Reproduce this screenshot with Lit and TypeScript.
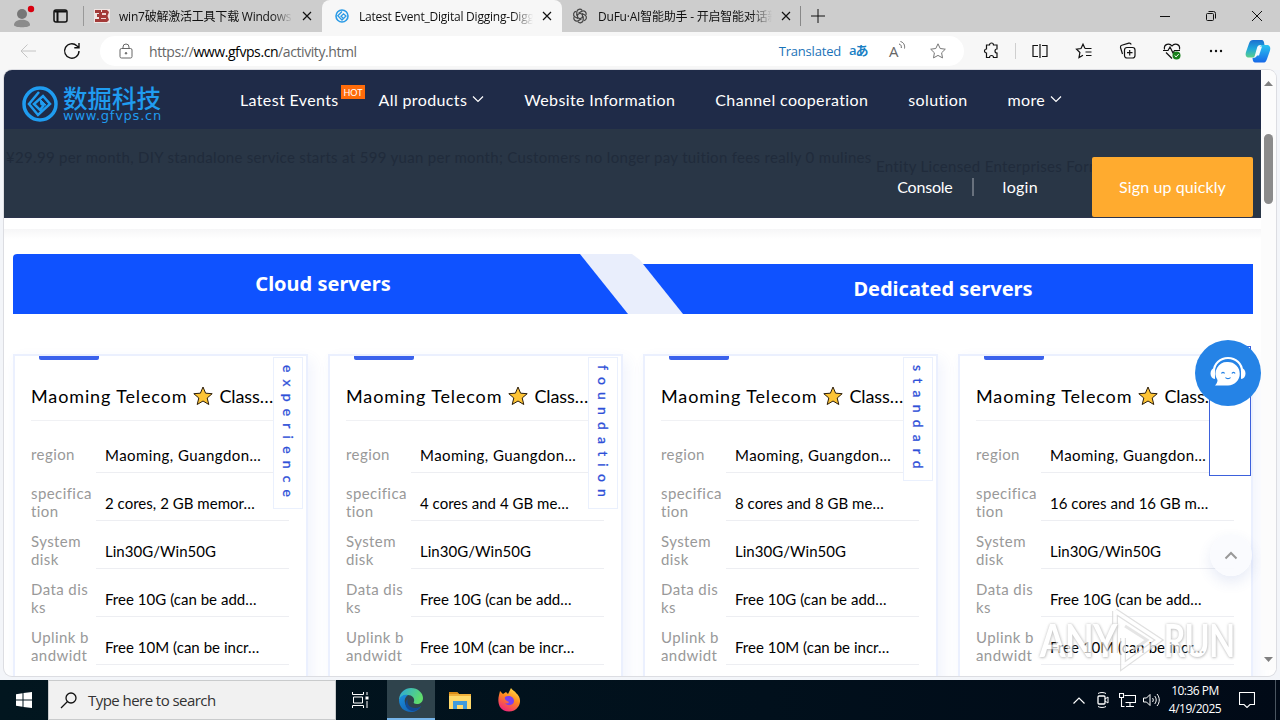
import { html, css, svg, nothing, LitElement, TemplateResult } from "lit";
import { customElement, property } from "lit/decorators.js";
import { classMap } from "lit/directives/class-map.js";

interface Plan {
  level: string;
  spec: string;
}

const PLANS: Plan[] = [
  { level: "experience", spec: "2 cores, 2 GB memor…" },
  { level: "foundation", spec: "4 cores and 4 GB me…" },
  { level: "standard", spec: "8 cores and 8 GB me…" },
  { level: "", spec: "16 cores and 16 GB m…" },
];

const FONT_WEB = css`Lato, "Noto Sans CJK SC", sans-serif`;
const FONT_UI = css`"Open Sans", "Noto Sans CJK SC", sans-serif`;

// all icons use a box of w x h user units = px
const icon = (w: number, h: number, body: TemplateResult) => html`
  <svg width=${w} height=${h} viewBox="0 0 ${w} ${h}" fill="none" stroke="currentColor">${body}</svg>
`;

const closeIcon = icon(10, 10, svg`<path d="M1 1l8 8M9 1l-8 8" stroke-width="1.2" />`);
const chevron = icon(12, 8, svg`<path d="M1 1.5l5 5 5-5" stroke-width="1.2" />`);
const star = "M9 1.8l2.2 4.7 5.1.7-3.7 3.6.9 5.1L9 13.4l-4.5 2.5.9-5.1L1.7 7.2l5.1-.7z";

@customElement("browser-chrome")
export class BrowserChrome extends LitElement {
  private tab(title: string, favicon: TemplateResult, kind = "") {
    return html`
      <div class=${classMap({ tab: true, active: kind === "active", last: kind === "last" })}>
        <span class="favicon">${favicon}</span>
        <span class="title">${title}</span>
        ${closeIcon}
      </div>
    `;
  }

  override render() {
    return html`
      <div class="strip">
        <div class="profile">
          ${icon(22, 24, svg`<g stroke="none"><circle cx="9" cy="9" r="5" fill="#777" /><path d="M1 20c0-7 16-7 16 0 0 3-16 3-16 0z" fill="#8b8b8b" /><circle cx="18" cy="4" r="3.2" fill="#d8000f" /></g>`)}
        </div>
        <div class="actions">
          ${icon(15, 14, svg`<rect x="1" y="1" width="13" height="12" rx="2" stroke-width="1.5" /><path d="M1.5 2.5h12M4.500 3v10" stroke-width="2" />`)}
        </div>
        ${this.tab(
          "win7破解激活工具下载 Windows 7",
          icon(16, 14, svg`<g stroke="none"><path d="M0 0h16v14H0z" fill="#efe6e4" /><path d="M1 1h6v2h1V1h5l2 2-1.500 4L15 11l-2 2H1v-3h4V8H3V5h2V4H1z" fill="#a33a38" /><path d="M8 4h4v2H8zM7 9h5v1H7z" fill="#efd6d4" /></g>`)
        )}
        ${this.tab(
          "Latest Event_Digital Digging-Digging",
          icon(14, 14, svg`<circle cx="7" cy="7" r="6" stroke="#2b9be6" stroke-width="1.6" /><path d="M7 2.500L2.800 6.800 7 11l4-4-2.500-2.200-2.500 2.400L8 9" stroke="#2b9be6" stroke-width="1.3" />`),
          "active"
        )}
        ${this.tab(
          "DuFu·AI智能助手 - 开启智能对话新",
          icon(16, 16, svg`<g stroke="#444" stroke-width="1.2">${[0, 60, 120, 180, 240, 300].map(
            (a) => svg`<path d="M8 5.200L4.800 7V3.800a3 3 0 0 1 5.300-1.500" transform="rotate(${a} 8 8)" />`
          )}</g>`),
          "last"
        )}
        <div class="plus">${icon(14, 14, svg`<path d="M7 0v14M0 7h14" />`)}</div>
        <div class="controls">
          <span>${icon(10, 10, svg`<path d="M0 5.500h10" />`)}</span>
          <span>${icon(10, 10, svg`<rect x=".5" y="2.500" width="7" height="7" rx="1" /><path d="M2.500.5h5a2 2 0 0 1 2 2v5" />`)}</span>
          <span>${icon(10, 10, svg`<path d="M0 0l10 10M10 0L0 10" />`)}</span>
        </div>
      </div>
      <div class="toolbar">
        <span class="back">${icon(16, 14, svg`<path d="M16 7H1M7.500.5L1 7l6.500 6.500" />`)}</span>
        <span class="reload">${icon(18, 18, svg`<path d="M16 9a7.200 7.200 0 1 1-2.200-5.200L16 5.500M16 1v4.700h-4.700" stroke-width="1.4" />`)}</span>
        <div class="address">
          ${icon(14, 16, svg`<rect x="1" y="5.500" width="12" height="9.500" rx="1.500" /><path d="M4 5.500V4a3 3 0 0 1 6 0v1.500" /><circle cx="7" cy="10.300" r=".8" fill="currentColor" />`)}
          <span class="url">https://<b>www.gfvps.cn</b>/activity.html</span>
          <span class="translated">Translated</span>
          <span class="lang">aあ</span>
          <span class="read">A${icon(7, 9, svg`<path d="M0 3c2 .5 2.500 2 2.300 4M1.500.5c3.500 1 4.500 4 4 7" />`)}</span>
          ${icon(18, 18, svg`<path d=${star} stroke="#777" />`)}
        </div>
        <span class="tool first">${icon(18, 18, svg`<path d="M4.500 3h3a2 2 0 0 1 4 0H15v4a2 2 0 0 0 0 4v4.500h-3.500a2 2 0 0 0-4 0h-3V11a2 2 0 0 1 0-4z" stroke-width="1.2" />`)}</span>
        <i class="sep"></i>
        <span class="tool">${icon(16, 14, svg`<path d="M6 1.500H1v11h5M10 1.500h5v11h-5M8 0v14" stroke-width="1.2" />`)}</span>
        <span class="tool">${icon(18, 18, svg`<path d="M10 6.500L8 2.200 6 6.500l-4.500.7 3.400 3.300L4 15.500l4-2.300M10 6.500h6.500M10.500 10h6M11 13.500h5.500" stroke-width="1.2" />`)}</span>
        <span class="tool">${icon(18, 18, svg`<rect x="5.500" y="5.500" width="10.500" height="10.500" rx="2.500" stroke-width="1.2" /><path d="M10.700 8v5.500M8 10.700h5.500M3.500 12L1.500 5.500a2 2 0 0 1 1.300-2.300l7-2a2 2 0 0 1 2.400 1.300" stroke-width="1.2" />`)}</span>
        <span class="tool">${icon(18, 18, svg`<path d="M1.500 7.500C.5 2 6.500.5 9 4c2.500-3.500 8.500-2 7.500 3.500M0 8.500h5l2-3.500 3 6 1.500-2.500H17M3 10.500l6 6" stroke-width="1.2" /><circle cx="13.500" cy="13.500" r="4" fill="#18801c" stroke="none" /><path d="M11.600 13.500l1.500 1.400 2.600-2.800" stroke="#fff" />`)}</span>
        <span class="tool">${icon(16, 4, svg`<g fill="currentColor" stroke="none"><circle cx="3" cy="2" r="1.200" /><circle cx="8" cy="2" r="1.200" /><circle cx="13" cy="2" r="1.200" /></g>`)}</span>
        <span class="copilot">
          ${icon(26, 24, svg`
            <defs>
              <linearGradient id="l" x1="0" y1="0" x2="0" y2="1"><stop offset="0" stop-color="#1b6fd0" /><stop offset=".5" stop-color="#1fa8dc" /><stop offset="1" stop-color="#5ccf8a" /></linearGradient>
              <linearGradient id="r" x1="0" y1="0" x2="0" y2="1"><stop offset="0" stop-color="#2ac4f0" /><stop offset="1" stop-color="#1668e8" /></linearGradient>
            </defs>
            <g stroke="none">
              <path d="M8 1h8c3 0 3 2 3.500 5h-4c-2 0-3 1-3.500 3l-2 7c-.5 2-1 2.500-3 2.500H4c-3 0-4-2-3-5.500l3-8.500C5 1.500 6 1 8 1z" fill="url(#l)" />
              <path d="M18 23.500H11c-3 0-3-1.500-3.500-4.500 3 0 4-1 4.700-3l2.300-7c.5-2 1-3 3-3h4c3 0 4.500 2 3.500 5.500l-3 8.500c-1 3-2 3.500-4 3.500z" fill="url(#r)" />
              <path d="M13 7.500h4l-3 9h-3.500z" fill="#f2fbff" />
            </g>`)}
        </span>
      </div>
    `;
  }

  static styles = css`
    :host { display: block; font-family: ${FONT_UI}; color: #111; }
    svg { display: block; flex: none; }
    .strip { display: flex; align-items: center; height: 32px; background: #cdcdcd; }
    .profile { width: 22px; margin: 2px 0 0 13px; }
    .actions { width: 30px; padding-left: 18px; }
    .tab {
      display: flex;
      align-items: center;
      box-sizing: border-box;
      width: 239px;
      height: 32px;
      padding: 0 10px;
      font-size: 12px;
    }
    .tab:not(.active)::before { content: ""; width: 1px; height: 20px; background: #999; margin-left: -10px; }
    .tab.last::before { display: none; }
    .tab.active { width: 240px; height: 33px; background: #f7f7f7; border-radius: 8px 8px 0 0; padding-left: 12px; }
    .favicon { width: 16px; margin-right: 9px; display: flex; justify-content: center; }
    .tab:not(.active):not(.last) .favicon { margin-left: 10px; }
    .tab.last .favicon { margin-right: 10px; }
    .title {
      width: 174px;
      margin-right: 9px;
      overflow: hidden;
      white-space: nowrap;
      letter-spacing: -0.22px;
      mask-image: linear-gradient(to right, #000 88%, transparent);
    }
    .plus { padding-left: 10px; margin-left: -1px; border-left: 1px solid #888; height: 20px; display: flex; align-items: center; }
    .controls { margin-left: auto; display: flex; }
    .controls span { width: 46px; display: flex; justify-content: center; }
    .toolbar { display: flex; align-items: center; height: 38px; background: #f7f7f7; }
    .back { color: #c4c4c4; padding-left: 20px; }
    .reload { padding-left: 27px; }
    .address {
      display: flex;
      align-items: center;
      box-sizing: border-box;
      width: 864px;
      height: 30px;
      margin-left: 19px;
      padding: 0 17px 0 19px;
      border-radius: 15px;
      background: #fff;
      color: #666;
      font-size: 14px;
    }
    .url { flex: 1; margin-left: 16px; letter-spacing: -0.42px; }
    .url b { font-weight: 400; color: #000; }
    .translated { color: #1a73b8; font-size: 13px; letter-spacing: -0.2px; }
    .lang { color: #1a7fc4; font-size: 13px; font-weight: 600; width: 34px; padding-left: 8px; box-sizing: border-box; margin-bottom: 3px; white-space: nowrap; letter-spacing: -1px; }
    .read { display: flex; width: 17px; margin: 0 23px 0 14px; font-size: 15px; }
    .tool { width: 44px; display: flex; justify-content: center; }
    .tool.first { margin-left: 5px; }
    .sep { width: 1px; height: 16px; background: #cfcfcf; margin: 0 2px; }
    .copilot { padding-left: 7px; }
  `;
}

@customElement("server-card")
export class ServerCard extends LitElement {
  @property() level = "";
  @property() spec = "";

  private row(label: string[], value: string) {
    return html`
      <div class="row">
        <span class="label">${label.map((l) => html`<span>${l}</span>`)}</span>
        <span class=${classMap({ value: true, tight: /\d/.test(value) })}>${value}</span>
      </div>
    `;
  }

  override render() {
    return html`
      <div class="accent"></div>
      <h3>
        <span>Maoming Telecom</span>
        ${icon(20, 20, svg`<path d="M10 1l2.600 6.200 6.600.5-5 4.300 1.600 6.500L10 15l-5.800 3.500L5.800 12 .8 7.700l6.600-.5z" fill="#fdc436" stroke="#2b1d0a" />`)}
        <span class="series">Class…</span>
      </h3>
      ${this.row(["region"], "Maoming, Guangdon…")}
      ${this.row(["specifica", "tion"], this.spec)}
      ${this.row(["System", "disk"], "Lin30G/Win50G")}
      ${this.row(["Data dis", "ks"], "Free 10G (can be add…")}
      ${this.row(["Uplink b", "andwidt"], "Free 10M (can be incr…")}
      ${this.level ? html`<div class="level">${this.level}</div>` : nothing}
    `;
  }

  static styles = css`
    :host {
      display: block;
      position: relative;
      box-sizing: border-box;
      height: 340px;
      padding: 0 16px;
      border: 2px solid #ebf0fe;
      background: #fff;
      box-shadow: 4px 6px 14px rgba(60, 100, 220, 0.08);
      font-family: ${FONT_WEB};
    }
    .accent { width: 60px; height: 4px; margin-left: 8px; background: #3b62ec; border-radius: 0 0 2px 2px; }
    h3 {
      display: flex;
      align-items: center;
      gap: 6px;
      height: 49px;
      margin: 12px 0 9px;
      border-bottom: 1px solid #f0f1f4;
      box-sizing: border-box;
      font-size: 18px;
      font-weight: 400;
      letter-spacing: 0.87px;
      white-space: nowrap;
      color: #000;
    }
    .series { letter-spacing: -0.1px; }
    .row { display: flex; align-items: center; height: 48px; font-size: 15px; }
    .label { width: 65px; display: flex; flex-direction: column; line-height: 18px; color: #999; letter-spacing: 0.42px; white-space: nowrap; }
    .value {
      box-sizing: border-box;
      width: 193px;
      height: 36px;
      margin-top: 2px;
      padding-left: 9px;
      line-height: 37px;
      border-bottom: 1px solid #edeef2;
      color: #000;
      letter-spacing: 0.44px;
      white-space: nowrap;
    }
    .value.tight { letter-spacing: 0.03px; }
    .level {
      position: absolute;
      top: 1px;
      right: 3px;
      width: 28px;
      padding: 7px 0 4px;
      line-height: 28px;
      writing-mode: vertical-rl;
      border: 1px solid #eaf0fd;
      background: #fff;
      color: #2f50d8;
      font-size: 14px;
      letter-spacing: 7.2px;
      -webkit-text-stroke: 0.3px #2f50d8;
    }
  `;
}

@customElement("site-page")
export class SitePage extends LitElement {
  override render() {
    return html`
      <header>
        <nav>
          <div class="logo">
            ${icon(36, 36, svg`<g stroke="#1f9cf0"><circle cx="18" cy="18" r="16" stroke-width="3.5" /><path d="M17 6L7 18l9 11 12-11-7-8-9 8 6 6 4-5" stroke-width="2.5" /><path d="M18 13l6 6h-5z" fill="#1f9cf0" /></g>`)}
            <div><strong>数掘科技</strong><small>www.gfvps.cn</small></div>
          </div>
          <a>Latest Events<em>HOT</em></a>
          <a>All products ${chevron}</a>
          <a>Website Information</a>
          <a>Channel cooperation</a>
          <a>solution</a>
          <a>more ${chevron}</a>
        </nav>
        <div class="band">
          <p class="ghost">¥29.99 per month, DIY standalone service starts at 599 yuan per month; Customers no longer pay tuition fees really 0 mulines</p>
          <p class="ghost second">Entity Licensed Enterprises Formal</p>
          <div class="account">
            <a>Console</a><i></i><a class="login">login</a><button>Sign up quickly</button>
          </div>
        </div>
      </header>
      <div class="fold"></div>
      <div class="kinds">
        <svg width="1240" height="60" viewBox="0 0 1240 60">
          <path d="M567 0h52l8 6 43 54h-56z" fill="#e9eefc" />
          <path d="M0 4a4 4 0 0 1 4-4h563l48 60H0z" fill="#0f52ff" />
          <path d="M630 10h610v50H670z" fill="#0f52ff" />
        </svg>
        <h2>Cloud servers</h2>
        <h2 class="low">Dedicated servers</h2>
      </div>
      <div class="cards">
        ${PLANS.map((p) => html`<server-card .level=${p.level} .spec=${p.spec}></server-card>`)}
      </div>
      <div class="side"></div>
      <div class="support">
        ${icon(40, 34, svg`
          <path d="M6 15a14 13 0 0 1 28 0" stroke="#fff" stroke-width="2.2" />
          <g fill="#fff" stroke="none">
            <path d="M7 12C1 12 1 23 7 23zM33 12c6 0 6 11 0 11z" />
            <path d="M20 6a11.500 11.500 0 1 1 0 23.500H7c2-2 2.500-4 2.500-5.500A11.600 11.600 0 0 1 20 6z" />
          </g>
          <path d="M13.500 17.500c.5-1.500 2.500-1.500 3 0M24 17.500c.5-1.500 2.500-1.500 3 0M17.500 21.500c1 1.500 4 1.500 5 0" stroke="#2583e6" stroke-width="1.3" />
        `)}
      </div>
      <div class="top">${icon(14, 9, svg`<path d="M1.500 7.500L7 2l5.500 5.500" stroke-width="2" />`)}</div>
      <div class="watermark">
        <span class="any">ANY</span>
        ${icon(56, 66, svg`<path d="M5 4v42M5 4l44 29-36 26v-28" stroke="#d4d4d4" stroke-width="6" /><path d="M15 19l22 14-14 10" stroke="#dcdcdc" stroke-width="3" /><path d="M5 4v42M5 4l44 29-36 26v-28" stroke="#fff" stroke-width="3.5" />`)}
        <span class="run">RUN</span>
      </div>
      <div class="scroll">
        <svg width="9" height="6"><path d="M0 6l4.500-5L9 6z" fill="#808080" /></svg>
        <i></i>
        <svg width="9" height="6"><path d="M0 0l4.500 5L9 0z" fill="#808080" /></svg>
      </div>
    `;
  }

  static styles = css`
    :host {
      display: block;
      position: relative;
      box-sizing: border-box;
      height: 606px;
      padding-right: 15px;
      overflow: hidden;
      border-radius: 8px;
      background: #fff;
      font-family: ${FONT_WEB};
    }
    svg { display: block; flex: none; }
    header { color: #fff; font-size: 16px; }
    nav { display: flex; align-items: center; gap: 40px; height: 59px; padding-left: 18px; background: #1f2b48; }
    nav a { display: flex; align-items: center; position: relative; gap: 5px; padding-bottom: 1px; letter-spacing: 0.37px; white-space: nowrap; }
    nav em {
      position: absolute;
      left: 101px;
      top: -5px;
      width: 24px;
      height: 14px;
      background: #ff6c0a;
      font: 9px/15px ${FONT_WEB};
      letter-spacing: 0;
      text-align: center;
    }
    .logo { display: flex; align-items: center; width: 178px; gap: 5px; margin-right: 0; color: #1f9cf0; padding-top: 8px; }
    .logo svg { margin-left: 0; }
    .logo strong { display: block; font: 500 24.500px/25px "Noto Sans CJK SC", sans-serif; white-space: nowrap; }
    .logo small { display: block; font: 13px/12px "DejaVu Sans", sans-serif; letter-spacing: 0.75px; }
    .band { position: relative; height: 89px; background: #293646; box-sizing: border-box; overflow: hidden; border-bottom: 1px solid #2c344d; }
    .ghost { position: absolute; left: 2px; top: 19px; margin: 0; font-size: 15px; letter-spacing: 0.32px; color: #202b3b; white-space: nowrap; }
    .ghost.second { left: 872px; top: 28px; }
    .account { position: relative; display: flex; align-items: center; justify-content: flex-end; height: 60px; padding: 28px 8px 0 0; }
    .account a { padding-bottom: 2px; letter-spacing: -0.2px; }
    .account .login { letter-spacing: 0.3px; }
    .account i { width: 2px; height: 18px; margin: 0 29px 0 19px; background: #68717d; }
    .account button {
      width: 161px;
      height: 60px;
      margin-left: 54px;
      padding: 0 0 2px;
      border: 0;
      border-radius: 2px;
      background: #ffab2f;
      color: #fff;
      font: 16px ${FONT_WEB};
      letter-spacing: 0.1px;
    }
    .fold { height: 25px; margin-top: 11px; background: linear-gradient(#f6f6f7, #fff 10px); }
    .kinds { position: relative; display: grid; grid-template-columns: 620px 620px; margin-left: 9px; height: 60px; }
    .kinds svg { position: absolute; }
    h2 { position: relative; margin: 0; text-align: center; font: 700 20px/59px "Noto Sans", sans-serif; color: #fff; letter-spacing: 0; }
    h2.low { padding-top: 10px; line-height: 49px; }
    .cards { display: grid; grid-template-columns: repeat(4, 295px); gap: 20px; margin: 40px 0 0 9px; }
    .side { position: absolute; left: 1205px; top: 276px; width: 40px; height: 128px; border: 1px solid #3d61dc; background: #fff; }
    .support {
      position: absolute;
      left: 1191px;
      top: 270px;
      width: 66px;
      height: 66px;
      display: grid;
      place-items: center;
      border-radius: 50%;
      background: #2583e6;
    }
    .top {
      position: absolute;
      left: 1206px;
      top: 464px;
      width: 42px;
      height: 42px;
      display: grid;
      place-items: center;
      border-radius: 50%;
      background: rgba(250, 251, 254, 0.92);
      color: #999;
      box-shadow: 0 6px 14px rgba(60, 90, 180, 0.12);
    }
    .watermark {
      position: absolute;
      left: 1036px;
      top: 537px;
      display: flex;
      align-items: center;
      opacity: 0.72;
      font: 700 46px/66px ${FONT_WEB};
      color: #fff;
      text-shadow: 0 0 3px #aaa, 1px 1px 3px #bbb;
    }
    .watermark span { display: flex; justify-content: center; white-space: nowrap; letter-spacing: -1px; }
    .watermark .any { width: 76px; margin-right: -6px; transform: scaleX(0.82); }
    .watermark .run { width: 66px; transform: scaleX(0.74); }
    .scroll {
      position: absolute;
      right: 0;
      top: 0;
      width: 15px;
      height: 600px;
      padding: 10px 0 7px;
      box-sizing: border-box;
      display: flex;
      flex-direction: column;
      align-items: center;
      background: #fcfcfc;
    }
    .scroll i { width: 9px; height: 70px; margin: 48px 0 auto; border-radius: 5px; background: #8b8b8b; }
  `;
}

@customElement("task-bar")
export class TaskBar extends LitElement {
  override render() {
    return html`
      <div class="start">${icon(16, 16, svg`<path d="M0 2.300l6.500-1v6.200H0zM7.500 1.100L16 0v7.500H7.500zM0 8.500h6.500v6.200L0 13.800zM7.500 8.500H16V16l-8.500-1.100z" fill="#fff" stroke="none" />`)}</div>
      <div class="search">
        ${icon(17, 17, svg`<circle cx="11" cy="6" r="5" stroke-width="1.3" /><path d="M7.500 9.500L1 16" stroke-width="1.3" />`)}
        <span>Type here to search</span>
      </div>
      <div class="app task">${icon(17, 16, svg`<path d="M.5 0v2.500h11V0M.5 16v-2.500h11V16M1.500 5h9v6h-9zM15 0v3M15 9v7" /><path d="M13.500 4.500h3v3h-3z" fill="#fff" stroke="none" />`)}</div>
      <div class="app on">
        ${icon(24, 24, svg`
          <defs>
            <linearGradient id="e" x1="0" y1="0" x2="1" y2=".4"><stop offset="0" stop-color="#2aa6e0" /><stop offset="1" stop-color="#5fdc6c" /></linearGradient>
            <linearGradient id="f" x1="0" y1="0" x2="1" y2="1"><stop offset="0" stop-color="#1b8fdc" /><stop offset="1" stop-color="#1157a8" /></linearGradient>
          </defs>
          <g stroke="none">
            <path d="M0 11C1 4 6 0 12 0c7 0 12 5 12 10 0 4-3 6-6 6-3 0-4-1-3-2.500C16 10 13 7 9 7 5 7 1 9 0 13z" fill="url(#e)" />
            <path d="M0 12c1-4 5-6 9-5-3 2-4 5-3 8 1 4 5 6 9 6 3 0 5-1 7-3-2 4-6 6-10 6C5 24 0 19 0 12z" fill="url(#f)" />
            <path d="M9 11c-2 5 2 9 7 9 3 0 5-1 6-2-2 4-6 5-9 5-6-1-9-8-4-12z" fill="#134a94" />
          </g>`)}
      </div>
      <div class="app">
        ${icon(22, 18, svg`<g stroke="none"><path d="M0 1h8l2 2h12v15H0z" fill="#f0b03a" /><path d="M0 1h8l2 2H0z" fill="#d98b16" /><path d="M0 5h22v13H0z" fill="#ffd96b" /><path d="M4 10h14v8h-4v-4H8v4H4z" fill="#3f9bdc" /></g>`)}
      </div>
      <div class="app">
        ${icon(24, 24, svg`
          <defs><linearGradient id="x" x1=".8" y1="0" x2=".3" y2="1"><stop offset="0" stop-color="#ffe14a" /><stop offset=".45" stop-color="#ff8a1e" /><stop offset="1" stop-color="#f0247c" /></linearGradient></defs>
          <g stroke="none">
            <path d="M2 7l1-4 3 3 3-2 2 2 3-6c2 3 4 3 5 5 5 4 5 10 2 14-4 6-14 6-18 0-2-4-2-8-1-12z" fill="url(#x)" />
            <path d="M8 9c3-2 9-1 9 4 0 4-6 6-9 2 2 1 4 0 4-1-2-1-5-2-4-5z" fill="#7a3ff0" />
          </g>`)}
      </div>
      <div class="tray">
        <span>${icon(12, 7, svg`<path d="M.5 6.500L6 1l5.500 5.500" stroke-width="1.2" />`)}</span>
        <span>${icon(14, 16, svg`<rect x="2" y="4" width="7" height="8" rx="1" stroke-width="1.3" /><path d="M9 7l3-2v6l-3-2M2 1.500c2-1.300 6-1.300 8 0M2 14.500c2 1.300 6 1.300 8 0" />`)}</span>
        <span>${icon(17, 14, svg`<path d="M5.500 2.500h11v7h-10M11 10v3M7 13.500h8M2.500 4.500v9h3M.5.5h4v4h-4z" stroke-width="1.1" />`)}</span>
        <span>${icon(17, 14, svg`<path d="M.5 5h3l3.500-3.500v11L3.500 9h-3zM9.500 5c1 1.200 1 2.800 0 4M11.700 3c2 2.400 2 5.600 0 8M14 1c3 3.600 3 8.400 0 12" />`)}</span>
        <div class="clock"><span>10:36 PM</span><span>4/19/2025</span></div>
        ${icon(16, 16, svg`<path d="M.5.5h15v12h-4.500l-3 3-3-3H.5z" stroke-width="1.1" />`)}
        <i></i>
      </div>
    `;
  }

  static styles = css`
    :host {
      display: flex;
      height: 40px;
      background: linear-gradient(to right, #02161f, #01101c 60%, #010a17);
      font-family: ${FONT_UI};
      color: #fff;
    }
    svg { display: block; flex: none; }
    .start { width: 48px; display: grid; place-items: center; }
    .search {
      display: flex;
      align-items: center;
      gap: 11px;
      box-sizing: border-box;
      width: 288px;
      padding-left: 11px;
      border: 1px solid #c9cbcc;
      background: #f1f1f1;
      color: #333;
      font-size: 15px;
      letter-spacing: -0.55px;
    }
    .search svg { color: #111; }
    .app { width: 48px; margin-right: 1px; display: grid; place-items: center; }
    .app.task { width: 48px; margin-right: 3px; }
    .app.on { background: #2f434c; box-shadow: inset 0 -2px #76b5ea; }
    .tray { margin-left: auto; display: flex; align-items: center; }
    .tray > span { width: 24px; display: flex; justify-content: center; }
    .clock { display: flex; flex-direction: column; align-items: center; width: 64px; margin-right: 12px; font-size: 12px; line-height: 18px; letter-spacing: -0.5px; }
    .tray i { width: 1px; height: 40px; margin: 0 4px 0 20px; background: #4a5560; }
  `;
}

@customElement("app-root")
export class AppRoot extends LitElement {
  override render() {
    return html`
      <browser-chrome></browser-chrome>
      <main><site-page></site-page></main>
      <task-bar></task-bar>
    `;
  }

  static styles = css`
    :host { display: block; width: 1280px; height: 720px; overflow: hidden; background: #f7f7f7; }
    main { box-sizing: border-box; height: 610px; padding: 0 4px 4px; background: #f3f5f9; }
    site-page { box-shadow: 0 0 0 1px #dcdde2; }
  `;
}
